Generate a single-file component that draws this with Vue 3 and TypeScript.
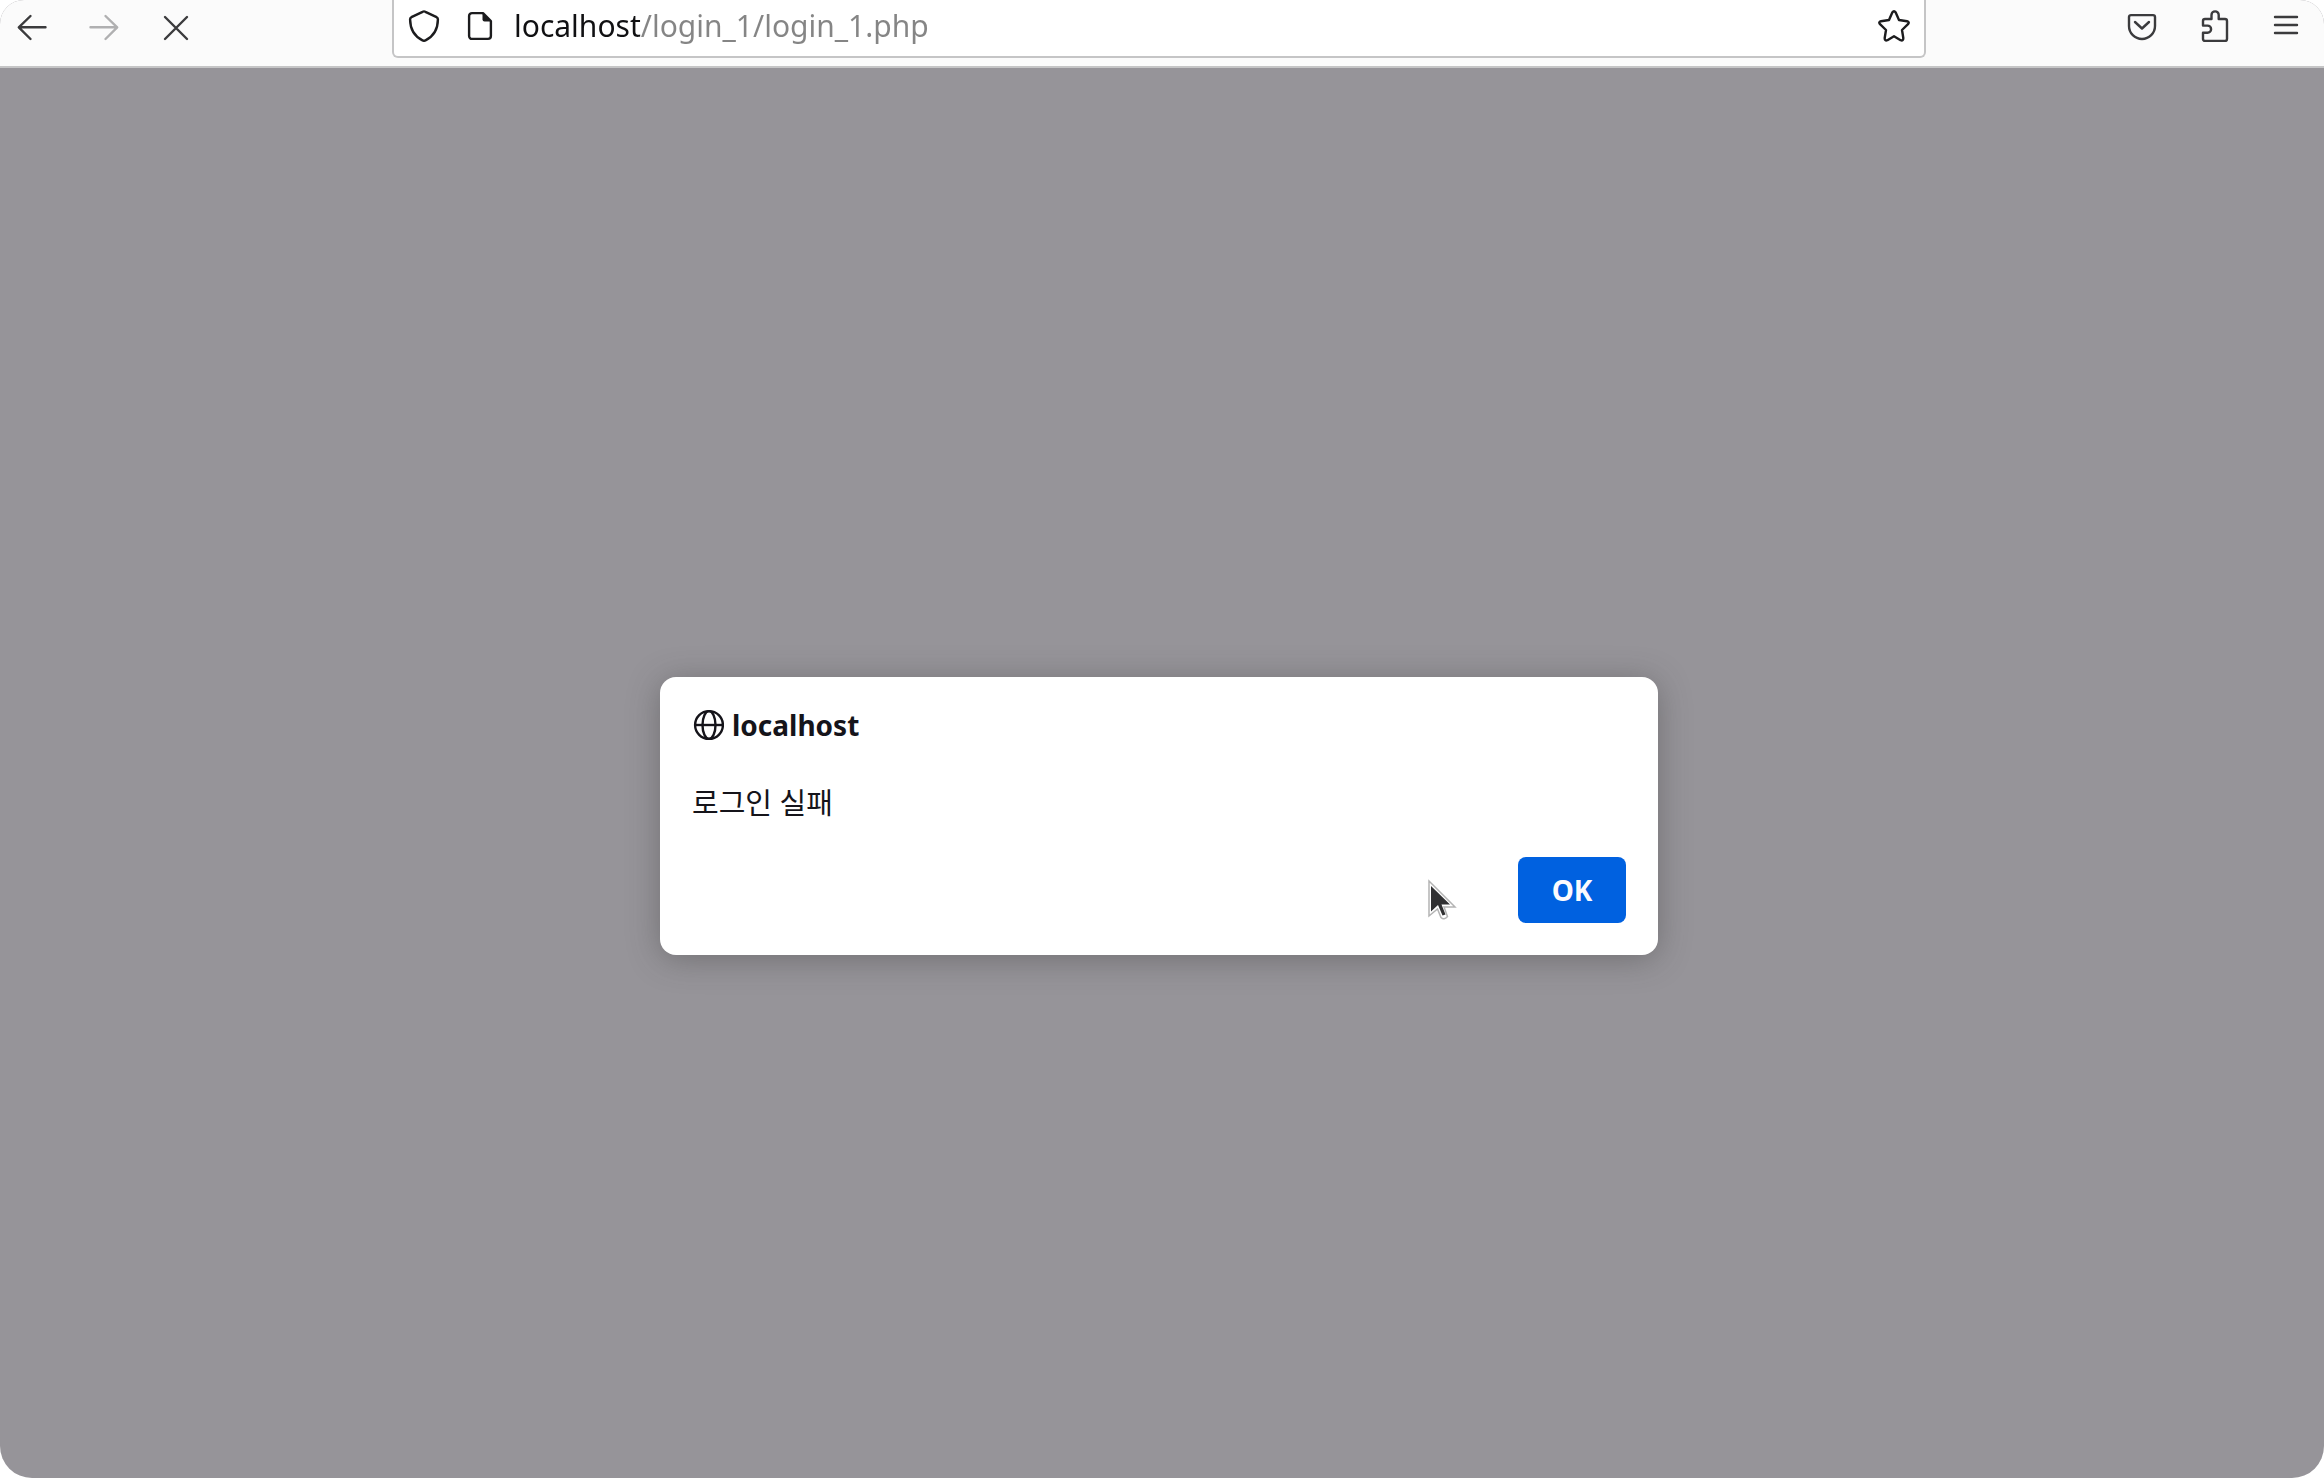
<script setup lang="ts">
import { ref } from 'vue'

const address = ref<string>('localhost/login_1/login_1.php')
const host = 'localhost'
const message = '로그인 실패'
</script>

<template>
  <div class="window">
    <header class="toolbar">
      <nav class="group" aria-label="Navigation">
        <button class="tool" type="button" aria-label="Back">
          <svg class="icon" viewBox="0 0 32 32"><path d="M29.500 17.3H3M14.5 6L2.8 17.3L14.5 29" /></svg>
        </button>
        <button class="tool" type="button" aria-label="Forward" disabled>
          <svg class="icon" viewBox="0 0 32 32"><path d="M2.500 17.3H29M17.5 6L29.2 17.3L17.5 29" /></svg>
        </button>
        <button class="tool" type="button" aria-label="Stop">
          <svg class="icon" viewBox="0 0 32 32"><path d="M5 7L27 29M27 7L5 29" /></svg>
        </button>
      </nav>

      <div class="field">
        <button class="tool dark" type="button" aria-label="Tracking protection">
          <svg class="icon" viewBox="0 0 32 32">
            <path d="M14.6 1.8Q16 1 17.4 1.8L28.6 7.2Q30 8 29.9 9.6C29.8 19 25.5 26.5 17.5 30.4Q16 31.2 14.5 30.4C6.5 26.5 2.2 19 2.1 9.6Q2 8 3.4 7.2Z" />
          </svg>
        </button>
        <button class="tool dark" type="button" aria-label="Site information">
          <svg class="icon" viewBox="0 0 32 32">
            <path d="M8 3.1H19L26.9 11V26A2.9 2.9 0 0 1 24 28.9H8A2.9 2.9 0 0 1 5.1 26V6A2.9 2.9 0 0 1 8 3.1Z" />
            <path class="solid" d="M18.5 3V9.5A2 2 0 0 0 20.5 11.5H27Z" />
          </svg>
        </button>
        <input v-model="address" class="address" type="text" aria-label="Address" spellcheck="false" />
        <button class="tool dark" type="button" aria-label="Bookmark this page">
          <svg class="icon" viewBox="0 0 32 32">
            <path d="M14.3 2.5Q16 0 17.7 2.5L21 10L29 11.2Q31.8 12 30 14.2L24 20L25.3 28Q25.4 31.2 22.6 30.2L16 26.3L9.4 30.2Q6.6 31.2 6.7 28L8 20L2 14.2Q.2 12 3 11.2L11 10Z" />
          </svg>
        </button>
      </div>

      <div class="group">
        <button class="tool" type="button" aria-label="Save to Pocket">
          <svg class="icon" viewBox="0 0 32 32">
            <path d="M5 5.1H27A2 2 0 0 1 29 7.1V16A13 13 0 0 1 3 16V7.1A2 2 0 0 1 5 5.1ZM9 12L16 18.5L23 12" />
          </svg>
        </button>
        <button class="tool" type="button" aria-label="Extensions">
          <svg class="icon" viewBox="0 0 32 32">
            <path d="M7 9H13.5V5A3.6 3.6 0 0 1 20.7 5V9H27A2 2 0 0 1 29 11V29A2 2 0 0 1 27 31H7A2 2 0 0 1 5 29V22.8H9.5A3.6 3.6 0 0 0 9.5 15.6H5V11A2 2 0 0 1 7 9Z" />
          </svg>
        </button>
        <button class="tool" type="button" aria-label="Application menu">
          <svg class="icon" viewBox="0 0 32 32"><path d="M5 7H27M5 15H27M5 23H27" /></svg>
        </button>
      </div>
    </header>

    <main class="page">
      <section class="dialog" role="alertdialog" aria-labelledby="dialog-title" aria-describedby="dialog-message">
        <h1 id="dialog-title" class="title">
          <svg class="globe" viewBox="0 0 32 32" aria-hidden="true">
            <circle cx="17" cy="16" r="13.9" />
            <ellipse cx="17" cy="16" rx="6.5" ry="13.9" />
            <path d="M3 16H31" />
          </svg>
          <span>{{ host }}</span>
        </h1>
        <p id="dialog-message" class="message">{{ message }}</p>
        <div class="actions">
          <button class="ok" type="button">OK</button>
        </div>
        <svg class="pointer" viewBox="0 0 32 44" aria-hidden="true">
          <path class="halo" d="M3 2V37L11.5 30L15 38.5Q18 41.5 21.500 37.500L18 28H29Z" />
          <path class="arrow" d="M5 7V32.500L12 26L16.500 36.500L19.500 35.500L15.5 25.500H24Z" />
        </svg>
      </section>
    </main>
  </div>
</template>

<style>
body {
  margin: 0;
  background: #ffffff;
}
</style>

<style scoped>
.window {
  display: flex;
  flex-direction: column;
  min-height: 100vh;
  overflow: hidden;
  border-radius: 24px 24px 32px 32px;
  background: #969499;
  font-family: "Noto Sans", "Noto Sans CJK KR", sans-serif;
}

.toolbar {
  display: flex;
  align-items: flex-start;
  gap: 200px;
  padding: 0 22px 8px 16px;
  border-bottom: 2px solid #c5c5c6;
  background: #fbfbfb;
}

.group {
  display: flex;
  gap: 40px;
  padding-top: 10px;
}

.tool {
  flex: none;
  width: 32px;
  height: 32px;
  padding: 0;
  border: 0;
  background: none;
  color: #3b3b3d;
}

.tool:disabled {
  color: #b0b0b1;
}

.tool.dark {
  color: #1c1c1e;
}

.icon {
  display: block;
  width: 32px;
  height: 32px;
  fill: none;
  stroke: currentColor;
  stroke-width: 2.4;
  stroke-linecap: round;
  stroke-linejoin: round;
}

.solid {
  fill: currentColor;
  stroke: none;
}

.field {
  display: flex;
  flex: 1;
  align-items: center;
  gap: 24px;
  box-sizing: border-box;
  height: 58px;
  padding: 0 14px 4px;
  border: solid #c5c5c6;
  border-width: 0 2px 2px;
  border-radius: 0 0 6px 6px;
  background: #ffffff;
}

.address {
  flex: 1;
  min-width: 0;
  height: 44px;
  margin-left: -6px;
  padding: 0;
  border: 0;
  outline: 0;
  background: linear-gradient(to right, #101012 127px, #858585 127px);
  background-clip: text;
  -webkit-text-fill-color: transparent;
  font: 30px/44px "Noto Sans", sans-serif;
}

.page {
  display: flex;
  flex: 1;
  align-items: center;
  justify-content: center;
  padding: 86px 6px 0 0;
}

.dialog {
  position: relative;
  box-sizing: border-box;
  width: 998px;
  padding: 30px 32px 32px;
  border-radius: 16px;
  background: #ffffff;
  box-shadow: 0 4px 32px rgba(58, 57, 58, 0.4);
  color: #15141a;
}

.title {
  display: flex;
  align-items: center;
  gap: 8px;
  margin: 0;
  font-size: 28px;
  line-height: 36px;
  font-weight: 700;
}

.globe {
  width: 32px;
  height: 32px;
  fill: none;
  stroke: currentColor;
  stroke-width: 2.4;
}

.message {
  margin: 40px 0 34px;
  font-size: 29px;
  line-height: 40px;
}

.actions {
  display: flex;
  justify-content: flex-end;
}

.ok {
  width: 108px;
  height: 66px;
  padding: 0;
  border: 0;
  border-radius: 8px;
  background: #0061e0;
  color: #fbfbfe;
  font: 700 28px/36px "Noto Sans", sans-serif;
}

.pointer {
  position: absolute;
  right: 200px;
  bottom: 32px;
  width: 32px;
  height: 44px;
}

.halo {
  fill: #ffffff;
  stroke: #b4b4b4;
  stroke-width: 1.5;
}

.arrow {
  fill: #303032;
}
</style>
